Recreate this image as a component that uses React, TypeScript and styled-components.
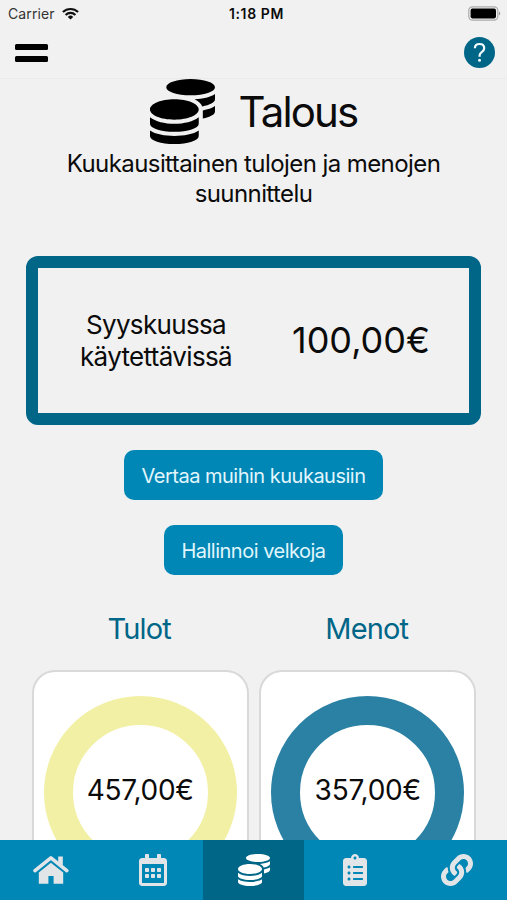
import React from "react";
import styled, { createGlobalStyle } from "styled-components";
import { FaCoins, FaRegCalendarAlt, FaClipboardList, FaLink } from "react-icons/fa";

const GlobalStyle = createGlobalStyle`
  * { box-sizing: border-box; }
  body {
    margin: 0;
    background: #f1f1f1;
    color: #0b0b0b;
    font-family: Inter, "Liberation Sans", sans-serif;
  }
`;

const Screen = styled.div`
  height: 900px;
  display: flex;
  flex-direction: column;
  overflow: hidden;
`;

const StatusBar = styled.div`
  height: 27px;
  flex: none;
  display: grid;
  grid-template-columns: 1fr auto 1fr;
  align-items: center;
  padding: 0 6px 0 8px;
`;

const Carrier = styled.div`
  display: flex;
  align-items: center;
  gap: 7.5px;
  font-size: 14px;
  letter-spacing: 0.1px;
  color: #333;
`;

const Clock = styled.div`
  font-size: 14px;
  font-weight: 600;
  letter-spacing: 0.6px;
  padding-left: 4px;
`;

const BatterySlot = styled.div`
  display: flex;
  justify-content: flex-end;
`;

const Header = styled.header`
  height: 52px;
  flex: none;
  display: flex;
  justify-content: space-between;
  align-items: center;
  padding: 0 12px 0 15px;
  border-bottom: 1px solid #ebebeb;
`;

const MenuButton = styled.button`
  display: flex;
  flex-direction: column;
  gap: 6px;
  padding: 0;
  border: 0;
  background: none;
`;

const MenuLine = styled.span`
  width: 33px;
  height: 6px;
  border-radius: 1.5px;
  background: #000;
`;

const HelpButton = styled.button`
  width: 31px;
  height: 31px;
  padding: 0;
  border: 0;
  border-radius: 50%;
  background: #006688;
  display: flex;
`;

const Content = styled.main`
  flex: 1;
  min-height: 0;
  overflow: hidden;
  display: flex;
  flex-direction: column;
  align-items: center;
`;

const TitleRow = styled.div`
  height: 65px;
  flex: none;
  display: flex;
  align-items: center;
  gap: 24px;
`;

const Title = styled.h1`
  margin: 0;
  font-size: 42px;
  font-weight: 400;
  letter-spacing: -1.85px;
`;

const Subtitle = styled.p`
  margin: 5px 0 0;
  width: 420px;
  text-align: center;
  font-size: 24px;
  line-height: 30px;
  letter-spacing: -0.58px;
`;

const BalanceBox = styled.section`
  width: 455px;
  height: 169px;
  flex: none;
  margin-top: 46.5px;
  border: 12px solid #006688;
  border-radius: 12px;
  display: grid;
  grid-template-columns: 236px 1fr;
  align-items: center;
  text-align: center;
`;

const BalanceLabel = styled.div`
  font-size: 26px;
  line-height: 32px;
  letter-spacing: -0.66px;
  padding-top: 2px;
`;

const BalanceAmount = styled.div`
  font-size: 36px;
  padding-right: 21px;
`;

const ActionButton = styled.button<{ $width: number }>`
  width: ${(p) => p.$width}px;
  height: 50px;
  flex: none;
  margin: 25.5px 0 0;
  padding: 1px 0 0;
  border: 0;
  border-radius: 10px;
  background: #0087b5;
  color: #e2f6fd;
  font-family: inherit;
  font-size: 20px;
  letter-spacing: -0.5px;

  & + & {
    margin-top: 25px;
  }
`;

const Columns = styled.div`
  display: grid;
  grid-template-columns: 217px 217px;
  column-gap: 10.5px;
  margin-top: 33.5px;
  padding-left: 1px;
`;

const Column = styled.section`
  display: flex;
  flex-direction: column;
  align-items: center;
`;

const ColumnTitle = styled.h2`
  margin: 0 0 21px;
  font-size: 29px;
  line-height: 40px;
  font-weight: 400;
  letter-spacing: -0.85px;
  padding-right: 2px;
  color: #006688;
`;

const Card = styled.div`
  width: 217px;
  height: 300px;
  border: 2px solid #d9d9d9;
  border-radius: 23px;
  background: #fff;
  display: flex;
  justify-content: center;
  padding-top: 24.5px;
`;

const Ring = styled.div<{ $color: string }>`
  width: 193px;
  height: 193px;
  border: 29px solid ${(p) => p.$color};
  border-radius: 50%;
  display: flex;
  align-items: center;
  justify-content: center;
  padding-bottom: 6px;
  font-size: 28px;
  white-space: nowrap;
`;

const Amount = styled.span`
  flex: none;
  letter-spacing: -0.25px;
`;

const TabBar = styled.nav`
  height: 60px;
  flex: none;
  display: grid;
  grid-template-columns: repeat(5, 1fr);
  background: #0087b5;
`;

const Tab = styled.a<{ $active?: boolean }>`
  display: flex;
  align-items: center;
  justify-content: center;
  padding-left: 1px;
  background: ${(p) => (p.$active ? "#006688" : "transparent")};
  color: ${(p) => (p.$active ? "#fff" : "#e2e5e8")};
`;

const WifiIcon = () => (
  <svg width="17" height="13" viewBox="0 0 17 13" fill="none" stroke="#111" strokeWidth="2.1">
    <path d="M0.9 5.1a10.8 10.8 0 0 1 15.2 0" />
    <path d="M3.6 7.9a7 7 0 0 1 9.8 0" />
    <path d="M8.5 12.6 5.8 9.9a3.9 3.9 0 0 1 5.4 0z" fill="#111" stroke="none" />
  </svg>
);

const BatteryIcon = () => (
  <svg width="33" height="15" viewBox="0 0 33 15">
    <rect x="0.8" y="0.8" width="29" height="13.4" rx="3.6" fill="none" stroke="#aaa" strokeWidth="1.2" />
    <rect x="2.6" y="2.6" width="25.4" height="9.8" rx="1.8" fill="#000" />
    <path d="M31 5.4a2.4 2.4 0 0 1 0 4.2z" fill="#999" />
  </svg>
);

const QuestionIcon = () => (
  <svg width="31" height="31" viewBox="0 0 31 31" fill="none">
    <path
      d="M10.9 11.2C10.9 8.6 12.8 7 15.5 7s4.7 1.6 4.7 4.2c0 1.9-1 2.9-2.5 3.9-1.5 1-2.1 1.8-2.1 3.3v1.3"
      stroke="#f4fbfd"
      strokeWidth="2.2"
    />
    <circle cx="15.5" cy="23.3" r="1.5" fill="#f4fbfd" />
  </svg>
);

const HomeIcon = () => (
  <svg width="36" height="28" viewBox="0 0 36 28" fill="currentColor">
    <path d="M25.2 0.4h4.6v9.2l-4.6-3.8z" />
    <path
      d="M2 14.6 17.9 1.9 33.8 14.6"
      fill="none"
      stroke="currentColor"
      strokeWidth="3.6"
      strokeLinecap="round"
      strokeLinejoin="round"
    />
    <path d="M5.8 16.4 17.9 6.7 30.2 16.4V27.8H20.6V20h-5.2v7.8H5.8z" />
  </svg>
);

const summaries = [
  { title: "Tulot", amount: "457,00€", color: "#f2f0a5" },
  { title: "Menot", amount: "357,00€", color: "#2a81a4" },
];

const tabs = [
  { name: "home", icon: <HomeIcon /> },
  { name: "calendar", icon: <FaRegCalendarAlt size={32} /> },
  { name: "finance", icon: <FaCoins size={32} />, active: true },
  { name: "tasks", icon: <FaClipboardList size={32} /> },
  { name: "links", icon: <FaLink size={32} /> },
];

export default function App() {
  return (
    <>
      <GlobalStyle />
      <Screen>
        <StatusBar>
          <Carrier>
            Carrier
            <WifiIcon />
          </Carrier>
          <Clock>1:18 PM</Clock>
          <BatterySlot>
            <BatteryIcon />
          </BatterySlot>
        </StatusBar>
        <Header>
          <MenuButton>
            <MenuLine />
            <MenuLine />
          </MenuButton>
          <HelpButton>
            <QuestionIcon />
          </HelpButton>
        </Header>
        <Content>
          <TitleRow>
            <FaCoins size={65} color="#000" />
            <Title>Talous</Title>
          </TitleRow>
          <Subtitle>Kuukausittainen tulojen ja menojen suunnittelu</Subtitle>
          <BalanceBox>
            <BalanceLabel>
              Syyskuussa
              <br />
              käytettävissä
            </BalanceLabel>
            <BalanceAmount>100,00€</BalanceAmount>
          </BalanceBox>
          <ActionButton $width={259}>Vertaa muihin kuukausiin</ActionButton>
          <ActionButton $width={179}>Hallinnoi velkoja</ActionButton>
          <Columns>
            {summaries.map((s) => (
              <Column key={s.title}>
                <ColumnTitle>{s.title}</ColumnTitle>
                <Card>
                  <Ring $color={s.color}>
                    <Amount>{s.amount}</Amount>
                  </Ring>
                </Card>
              </Column>
            ))}
          </Columns>
        </Content>
        <TabBar>
          {tabs.map(({ name, icon, active }) => (
            <Tab key={name} $active={active}>
              {icon}
            </Tab>
          ))}
        </TabBar>
      </Screen>
    </>
  );
}
